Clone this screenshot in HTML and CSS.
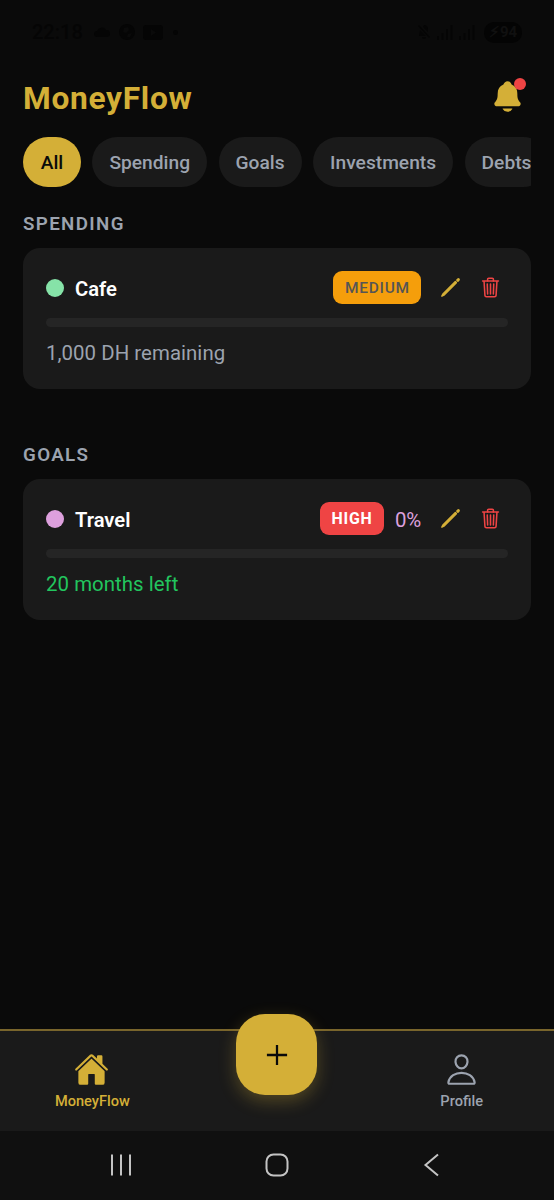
FILE: index.html
```html
<!DOCTYPE html>
<html lang="en">
<head>
    <meta charset="UTF-8">
    <meta name="viewport" content="width=device-width, initial-scale=1.0">
    <title>MoneyFlow</title>
    <link rel="stylesheet" href="styles.css">
</head>
<body>

    <!-- icons used more than once -->
    <svg class="sprite" width="0" height="0">
        <symbol id="icon-pencil" viewBox="0 0 512 512">
            <path d="M364.13 125.25L87 403l-23 45 44.99-23 277.76-277.13z"/>
            <path d="M420.69 68.69l-22.62 22.62 22.62 22.63 22.62-22.63a16 16 0 000-22.62 16 16 0 00-22.62 0z"/>
        </symbol>
        <symbol id="icon-trash" viewBox="0 0 512 512">
            <path d="M112 112l20 320c.95 18.49 14.4 32 32 32h184c17.67 0 30.87-13.51 32-32l20-320M80 112h352"/>
            <path d="M192 112V72a23.93 23.93 0 0124-24h80a23.93 23.93 0 0124 24v40M256 176v224M184 176l8 224M328 176l-8 224"/>
        </symbol>
        <symbol id="icon-signal" viewBox="0 0 18 16">
            <path d="M1 16v-4h2v4zM5.5 16V9h2v7zM10 16V5h2v11zM14.5 16V1h2v15z"/>
        </symbol>
    </svg>

    <div class="status-bar">
        <div class="status-left">
            <span class="time">22:18</span>
            <svg width="18" height="12" viewBox="0 0 18 12"><path d="M4 11a3 3 0 010-6 5 5 0 019-1 3.500 3.500 0 011 7z"/></svg>
            <svg width="16" height="16" viewBox="0 0 16 16"><path d="M8 0a8 8 0 108 8 8 8 0 00-8-8zM5 4l4-1 1 3-3 3-3-1zM9 10l4-1-2 4-3 0z" fill-rule="evenodd"/></svg>
            <svg width="20" height="15" viewBox="0 0 20 15"><path d="M3 0h14a3 3 0 013 3v9a3 3 0 01-3 3H3a3 3 0 01-3-3V3a3 3 0 013-3zM8 4v7l5-3.500z" fill-rule="evenodd"/></svg>
            <span class="more-dot"></span>
        </div>
        <div class="status-right">
            <svg width="15" height="16" viewBox="0 0 15 16"><path d="M2 1l11 12-1 1L1 2zM7 1a4 4 0 014 4v3L6 3zM3 6l6 6H2zM5 13h4a2 2 0 01-4 0z"/></svg>
            <svg width="18" height="16"><use href="#icon-signal"/></svg>
            <svg width="18" height="16"><use href="#icon-signal"/></svg>
            <span class="battery">&#9889;&#xFE0E;94</span>
        </div>
    </div>

    <header>
        <h1>MoneyFlow</h1>
        <button type="button" class="bell">
            <svg viewBox="0 0 512 512"><path d="M440.08 341.31c-1.66-2-3.29-4-4.89-5.93-22-26.61-35.31-42.67-35.31-118 0-39-9.33-71-27.72-95-13.56-17.73-31.89-31.18-56.05-41.12a3 3 0 01-.82-.67C306.6 51.49 282.82 32 256 32s-50.59 19.49-59.28 48.56a3.13 3.13 0 01-.81.65c-56.38 23.21-83.78 67.74-83.78 136.14 0 75.36-13.29 91.42-35.31 118-1.6 1.93-3.23 3.89-4.89 5.93a35.16 35.16 0 00-4.65 37.62c6.17 13 19.32 21.07 34.33 21.07H410.5c14.94 0 28-8.06 34.19-21a35.17 35.17 0 00-4.61-37.66zM256 480a80.06 80.06 0 0070.44-42.13 4 4 0 00-3.54-5.87H189.12a4 4 0 00-3.55 5.87A80.06 80.06 0 00256 480z"/></svg>
            <span class="bell-dot"></span>
        </button>
    </header>

    <div class="filters">
        <button type="button" class="chip active">All</button>
        <button type="button" class="chip">Spending</button>
        <button type="button" class="chip">Goals</button>
        <button type="button" class="chip">Investments</button>
        <button type="button" class="chip">Debts</button>
    </div>

    <main>
        <section>
            <h2>SPENDING</h2>
            <div class="card">
                <div class="card-top">
                    <span class="dot green"></span>
                    <h3>Cafe</h3>
                    <span class="badge medium">MEDIUM</span>
                    <div class="actions">
                        <svg class="edit"><use href="#icon-pencil"/></svg>
                        <svg class="delete"><use href="#icon-trash"/></svg>
                    </div>
                </div>
                <div class="progress"></div>
                <p>1,000 DH remaining</p>
            </div>
        </section>

        <section>
            <h2>GOALS</h2>
            <div class="card">
                <div class="card-top">
                    <span class="dot pink"></span>
                    <h3>Travel</h3>
                    <span class="badge high">HIGH</span>
                    <span class="percent">0%</span>
                    <div class="actions">
                        <svg class="edit"><use href="#icon-pencil"/></svg>
                        <svg class="delete"><use href="#icon-trash"/></svg>
                    </div>
                </div>
                <div class="progress"></div>
                <p class="time-left">20 months left</p>
            </div>
        </section>
    </main>

    <nav class="tab-bar">
        <a class="tab active">
            <svg viewBox="0 0 512 512" fill="currentColor">
                <path d="M261.56 101.28a8 8 0 00-11.06 0L66.4 277.15a8 8 0 00-2.47 5.79L63.9 448a32 32 0 0032 32H192a16 16 0 0016-16V328a8 8 0 018-8h80a8 8 0 018 8v136a16 16 0 0016 16h96.06a32 32 0 0032-32V282.94a8 8 0 00-2.47-5.79z"/>
                <path d="M490.91 244.15l-74.8-71.56V64a16 16 0 00-16-16h-48a16 16 0 00-16 16v32l-57.92-55.38C272.77 35.14 264.71 32 256 32c-8.68 0-16.72 3.14-22.14 8.63l-212.7 203.5c-6.22 6-7 15.87-1.34 22.37A16 16 0 0043 267.56L250.5 69.28a8 8 0 0111.06 0l207.52 198.28a16 16 0 0022.59-.44c6.14-6.36 5.63-16.86-.76-22.97z"/>
            </svg>
            <span>MoneyFlow</span>
        </a>
        <div class="tab">
            <button type="button" class="add">
                <svg viewBox="0 0 512 512"><path d="M256 104v304M408 256H104"/></svg>
            </button>
        </div>
        <a class="tab">
            <svg class="outline" viewBox="0 0 512 512">
                <path d="M344 144c-3.92 52.87-44 96-88 96s-84.15-43.12-88-96c-4-55 35-96 88-96s92 42 88 96z"/>
                <path d="M256 304c-87 0-175.3 48-191.64 138.6C62.39 453.52 68.57 464 80 464h352c11.44 0 17.62-10.48 15.65-21.4C431.3 352 343 304 256 304z"/>
            </svg>
            <span>Profile</span>
        </a>
    </nav>

    <div class="system-nav">
        <svg width="24" height="24" viewBox="0 0 24 24"><path d="M3 1.500v21M12 1.500v21M21 1.500v21"/></svg>
        <svg width="24" height="24" viewBox="0 0 24 24"><rect x="1.500" y="1.500" width="21" height="21" rx="7"/></svg>
        <svg width="24" height="24" viewBox="0 0 24 24"><path d="M18 1.500L5.500 12 18 22.500"/></svg>
    </div>

</body>
</html>
```
FILE: styles.css
```css
* {
    box-sizing: border-box;
}

body {
    font-family: Roboto, sans-serif;
    margin: 0;
    height: 1200px;
    display: flex;
    flex-direction: column;
    overflow: hidden;
    background-color: #0a0a0a;
    color: #fff;
}

h1, h2, h3, p {
    margin: 0;
}

button {
    font-family: inherit;
    border: none;
    padding: 0;
}

svg {
    display: block;
    flex-shrink: 0;
}

.sprite {
    position: absolute;
}

.status-bar {
    height: 64px;
    padding: 0 32px;
    display: flex;
    justify-content: space-between;
    align-items: center;
    color: #050505;
    fill: #050505;
}

.status-left, .status-right {
    display: flex;
    align-items: center;
    gap: 8px;
}

.time {
    font-size: 20px;
    font-weight: 500;
    margin-right: 2px;
}

.more-dot {
    width: 5px;
    height: 5px;
    margin-left: 2px;
    border-radius: 50%;
    background-color: #050505;
}

.status-right {
    gap: 4px;
}

.battery {
    width: 38px;
    height: 21px;
    line-height: 21px;
    margin-left: 4px;
    border-radius: 10px;
    background-color: #040404;
    color: #101010;
    font-size: 15px;
    font-weight: 700;
    text-align: center;
}

header {
    height: 73px;
    padding: 0 28px 7px 23px;
    display: flex;
    justify-content: space-between;
    align-items: center;
}

h1 {
    color: #d4af37;
    font-size: 31.7px;
    font-weight: 700;
    letter-spacing: 0.7px;
    padding-top: 2px;
}

.bell {
    position: relative;
    margin: 0 1px 2px 0;
    background: none;
    fill: #d4af37;
}

.bell svg {
    width: 35px;
    height: 35px;
}

.bell-dot {
    position: absolute;
    top: -1px;
    right: -1px;
    width: 12px;
    height: 12px;
    border-radius: 50%;
    background-color: #ef4444;
}

.filters {
    display: flex;
    gap: 11.5px;
    margin: 0 23px;
    overflow: hidden;
}

.chip {
    flex-shrink: 0;
    height: 49.5px;
    padding: 2px 17px 0;
    border-radius: 25px;
    background-color: #1a1a1a;
    color: #9ca3af;
    font-size: 19.2px;
    font-weight: 550;
}

.chip.active {
    padding: 2px 17.7px 0;
    background-color: #d4af37;
    color: #0a0a0a;
}

main {
    flex: 1;
    padding: 26px 23px 0;
}

section {
    height: 231px;
}

h2 {
    color: #9ca3af;
    font-size: 18.75px;
    line-height: 22px;
    font-weight: 600;
    letter-spacing: 1.35px;
    margin-bottom: 13px;
}

.card {
    height: 141px;
    padding: 23px;
    border-radius: 17px;
    background-color: #1a1a1a;
}

.card-top {
    display: flex;
    align-items: center;
    height: 33px;
    margin-bottom: 14px;
}

.dot {
    width: 18px;
    height: 18px;
    margin: 2px 11px 0 0;
    border-radius: 50%;
}

.green {
    background-color: #86e3a8;
}

.pink {
    background-color: #dda0dd;
}

h3 {
    flex: 1;
    font-size: 20.2px;
    font-weight: 600;
    padding-top: 4px;
}

.badge {
    height: 33px;
    line-height: 34px;
    padding: 0 11.5px;
    border-radius: 9px;
    font-size: 15.9px;
    letter-spacing: 0.72px;
}

.medium {
    background-color: #f59e0b;
    color: #555;
    font-size: 15.5px;
    font-weight: 500;
}

.high {
    background-color: #ef4444;
    font-weight: 700;
}

.percent {
    margin-left: 11px;
    padding-top: 4px;
    color: #dda0dd;
    font-size: 20.4px;
}

.actions {
    display: flex;
    gap: 17.4px;
    margin-top: 1px;
    margin-left: 17.5px;
    margin-right: 5.8px;
    fill: none;
    stroke-width: 34px;
    stroke-linecap: round;
    stroke-linejoin: round;
}

.actions svg {
    width: 23px;
    height: 23px;
}

.edit {
    stroke: #d4af37;
}

.delete {
    stroke: #ef4444;
}

.progress {
    height: 9px;
    margin-bottom: 13px;
    border-radius: 5px;
    background-color: #252525;
}

.card p {
    color: #9ca3af;
    font-size: 20.4px;
    line-height: 26px;
    letter-spacing: 0.05px;
}

.card .time-left {
    color: #22c55e;
}

.tab-bar {
    height: 102px;
    display: flex;
    border-top: 2px solid #79652c;
    background-color: #1a1a1a;
}

.tab {
    flex: 1;
    display: flex;
    flex-direction: column;
    align-items: center;
    padding-top: 21px;
    color: #9ca3af;
    font-size: 14.6px;
    font-weight: 500;
}

.tab.active {
    color: #d4af37;
}

.tab svg {
    width: 35px;
    height: 35px;
    margin: 0 1px 5px 0;
}

.outline {
    fill: none;
    stroke: #9ca3af;
    stroke-width: 32px;
}

/* lifted over the top edge of the bar */
.tab .add {
    width: 81px;
    height: 81px;
    margin: -38px 1px 0 0;
    display: flex;
    flex-shrink: 0;
    align-items: center;
    justify-content: center;
    border-radius: 29px;
    background-color: #d4af37;
    box-shadow: 0 6px 17px rgba(212, 175, 55, 0.3);
}

.tab .add svg {
    width: 34px;
    height: 34px;
    margin: 0;
    stroke: #0a0a0a;
    stroke-width: 34px;
}

.system-nav {
    height: 69px;
    padding: 0 110px 2px 109px;
    display: flex;
    justify-content: space-between;
    align-items: center;
    background-color: #101010;
    fill: none;
    stroke: #c4c4c4;
    stroke-width: 2px;
}
```
